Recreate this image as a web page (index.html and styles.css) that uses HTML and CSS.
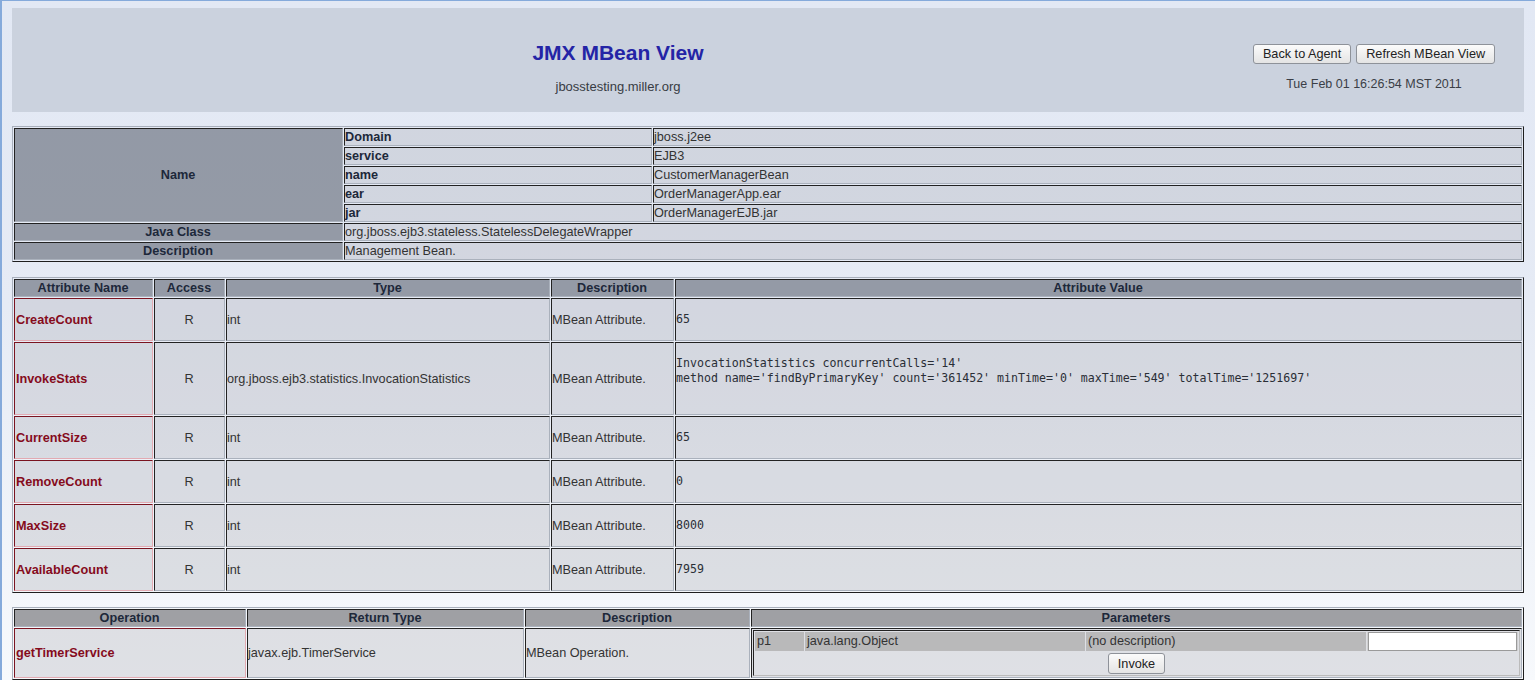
FILE: index.html
```html
<!DOCTYPE html>
<html>
<head>
<meta charset="utf-8">
<title>JMX MBean View</title>
<link rel="stylesheet" href="styles.css">
</head>
<body>
<div class="frame">
  <div class="banner">
    <div class="banner-main">
      <h1 class="title">JMX MBean View</h1>
      <div class="host">jbosstesting.miller.org</div>
    </div>
    <div class="banner-side">
      <div class="buttons">
        <button class="btn">Back to Agent</button>
        <button class="btn">Refresh MBean View</button>
      </div>
      <div class="date">Tue Feb 01 16:26:54 MST 2011</div>
    </div>
  </div>

  <table class="grid name-table">
    <colgroup><col class="c-name"><col class="c-key"><col></colgroup>
    <tr><th class="hd" rowspan="5">Name</th><th class="key">Domain</th><td>jboss.j2ee</td></tr>
    <tr><th class="key">service</th><td>EJB3</td></tr>
    <tr><th class="key">name</th><td>CustomerManagerBean</td></tr>
    <tr><th class="key">ear</th><td>OrderManagerApp.ear</td></tr>
    <tr><th class="key">jar</th><td>OrderManagerEJB.jar</td></tr>
    <tr><th class="hd">Java Class</th><td colspan="2">org.jboss.ejb3.stateless.StatelessDelegateWrapper</td></tr>
    <tr><th class="hd">Description</th><td colspan="2">Management Bean.</td></tr>
  </table>

  <table class="grid attr-table">
    <colgroup><col class="c-aname"><col class="c-access"><col class="c-type"><col class="c-desc"><col></colgroup>
    <tr class="head"><th class="hd">Attribute Name</th><th class="hd">Access</th><th class="hd">Type</th><th class="hd">Description</th><th class="hd">Attribute Value</th></tr>
    <tr><td class="aname">CreateCount</td><td class="center">R</td><td>int</td><td>MBean Attribute.</td><td><pre class="val">65</pre></td></tr>
    <tr><td class="aname">InvokeStats</td><td class="center">R</td><td>org.jboss.ejb3.statistics.InvocationStatistics</td><td>MBean Attribute.</td><td><pre class="val">InvocationStatistics concurrentCalls='14'
method name='findByPrimaryKey' count='361452' minTime='0' maxTime='549' totalTime='1251697'
&nbsp;</pre></td></tr>
    <tr><td class="aname">CurrentSize</td><td class="center">R</td><td>int</td><td>MBean Attribute.</td><td><pre class="val">65</pre></td></tr>
    <tr><td class="aname">RemoveCount</td><td class="center">R</td><td>int</td><td>MBean Attribute.</td><td><pre class="val">0</pre></td></tr>
    <tr><td class="aname">MaxSize</td><td class="center">R</td><td>int</td><td>MBean Attribute.</td><td><pre class="val">8000</pre></td></tr>
    <tr><td class="aname">AvailableCount</td><td class="center">R</td><td>int</td><td>MBean Attribute.</td><td><pre class="val">7959</pre></td></tr>
  </table>

  <table class="grid op-table">
    <colgroup><col class="c-op"><col class="c-ret"><col class="c-odesc"><col></colgroup>
    <tr class="head"><th class="hd">Operation</th><th class="hd">Return Type</th><th class="hd">Description</th><th class="hd">Parameters</th></tr>
    <tr>
      <td class="aname opname">getTimerService</td>
      <td>javax.ejb.TimerService</td>
      <td>MBean Operation.</td>
      <td class="params-cell">
        <table class="params">
          <colgroup><col class="c-p"><col class="c-ptype"><col class="c-pdesc"><col></colgroup>
          <tr class="prow"><td>p1</td><td>java.lang.Object</td><td>(no description)</td><td class="pinput"><input class="field" type="text"></td></tr>
          <tr><td colspan="4" class="center"><button class="btn small">Invoke</button></td></tr>
        </table>
      </td>
    </tr>
  </table>
</div>
</body>
</html>
```

FILE: styles.css
```css
html {
  height: 100%;
  background: linear-gradient(180deg, #e2e8f4 0%, #e6ebf5 45%, #f7f9fc 100%);
}
body {
  margin: 0;
  min-height: 100%;
  font-family: "Liberation Sans", Arial, sans-serif;
  font-size: 12.7px;
  color: #333;
}
.frame {
  border-top: 1px solid #85aadb;
  border-left: 2px solid #85aadb;
  padding: 7px 11px 0 10px;
}
.banner {
  display: flex;
  height: 104px;
  background: #cbd2de;
}
.banner-main {
  flex: 1;
  display: flex;
  flex-direction: column;
  align-items: center;
  padding-top: 33px;
}
.title {
  margin: 0;
  font-size: 21px;
  line-height: 24px;
  font-weight: bold;
  color: #2424a6;
}
.host {
  margin-top: 14px;
  font-size: 13px;
  line-height: 16px;
  color: #383c44;
}
.banner-side {
  width: 300px;
  display: flex;
  flex-direction: column;
  align-items: center;
  padding-top: 36px;
}
.buttons {
  display: flex;
  gap: 5px;
}
.btn {
  font-family: "Liberation Sans", Arial, sans-serif;
  font-size: 12.7px;
  color: #222;
  height: 20px;
  padding: 0 9px;
  border: 1px solid #8e9299;
  border-radius: 3px;
  background: linear-gradient(180deg, #fbfbfb, #e4e4e4);
}
.date {
  margin-top: 12px;
  font-size: 12.5px;
  line-height: 16px;
  color: #3a3e46;
}

.grid {
  width: 100%;
  table-layout: fixed;
  border-collapse: separate;
  border-spacing: 1px;
  border: 1px solid;
  border-color: #a8afbb #1e1e1e #1e1e1e #a8afbb;
  margin-top: 14px;
}
.attr-table { margin-top: 15px; }
.grid > tbody > tr > th,
.grid > tbody > tr > td {
  border: 1px solid;
  border-color: #222 #aab1bc #aab1bc #222;
  padding: 0 1px 0 0;
  line-height: 16px;
  text-align: left;
  vertical-align: middle;
  background: rgba(160, 162, 168, 0.28);
  white-space: nowrap;
  overflow: hidden;
}
.grid > tbody > tr > th { font-weight: bold; color: #1d283a; }
.grid > tbody > tr > th.hd {
  text-align: center;
  background: rgba(72, 80, 94, 0.52);
}
.grid > tbody > tr > th.key { background: rgba(160, 162, 168, 0.28); }
.grid > tbody > tr > td.center { text-align: center; }
.grid > tbody > tr > td.aname {
  font-weight: bold;
  color: #850b1c;
  padding-left: 1px;
  border-color: #7a1420 #e2aab2 #e2aab2 #7a1420;
}
.c-name { width: 329px; }
.c-key { width: 308px; }
.c-aname { width: 139px; }
.c-access { width: 71px; }
.c-type { width: 324px; }
.c-desc { width: 123px; }
.c-op { width: 232px; }
.c-ret { width: 277px; }
.c-odesc { width: 225px; }

.val {
  margin: 13px 0;
  font-family: "DejaVu Sans Mono", monospace;
  font-size: 11.6px;
  line-height: 15px;
  color: #2a2e36;
}

.op-table { margin-top: 14px; }
.op-table > tbody > tr.head > th.hd { background: rgba(90, 90, 92, 0.55); }
.params-cell { padding: 1px !important; }
.params {
  width: 100%;
  table-layout: fixed;
  border-collapse: separate;
  border-spacing: 1px;
  border: 1px solid;
  border-color: #222 #bbb #bbb #222;
}
.params td {
  padding: 0 2px;
  line-height: 19px;
  white-space: nowrap;
}
.params td.center { text-align: center; padding: 1px 0 0; }
.prow td { background: #b9b9ba; }
.prow td.pinput { padding: 0 1px; background: #cfcfd0; }
.c-p { width: 49px; }
.c-ptype { width: 280px; }
.c-pdesc { width: 280px; }
.field {
  display: block;
  box-sizing: border-box;
  width: 100%;
  height: 19px;
  border: 1px solid #9a9a9a;
  background: #fff;
  margin: 0;
}
.btn.small { height: 21px; padding: 0 9px; }
```
